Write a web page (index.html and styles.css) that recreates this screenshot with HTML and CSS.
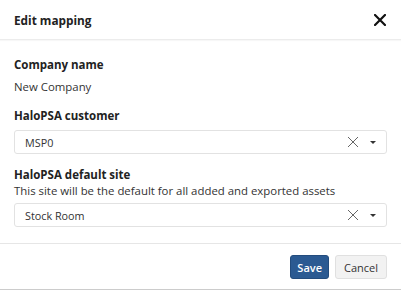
FILE: index.html
```html
<!DOCTYPE html>
<html lang="en">
<head>
    <meta charset="UTF-8">
    <title>Edit mapping</title>
    <link rel="stylesheet" href="styles.css">
</head>
<body>
    <div class="modal">
        <div class="modal-header">
            <h2 class="modal-title">Edit mapping</h2>
            <button class="close-btn" aria-label="Close">
                <svg width="12" height="12" viewBox="0 0 12 12"><path d="M1 1L11 11M11 1L1 11" stroke="#111" stroke-width="2.2" stroke-linecap="square"/></svg>
            </button>
        </div>

        <div class="modal-body">
            <div class="field-label">Company name</div>
            <div class="field-value">New Company</div>

            <div class="field-label spaced">HaloPSA customer</div>
            <div class="select">
                <span class="select-value">MSP0</span>
                <span class="select-clear">
                    <svg width="12" height="12" viewBox="0 0 12 12"><path d="M1 1L11 11M11 1L1 11" stroke="#666" stroke-width="1"/></svg>
                </span>
                <span class="select-caret"></span>
            </div>

            <div class="field-label spaced">HaloPSA default site</div>
            <div class="field-help">This site will be the default for all added and exported assets</div>
            <div class="select">
                <span class="select-value">Stock Room</span>
                <span class="select-clear">
                    <svg width="12" height="12" viewBox="0 0 12 12"><path d="M1 1L11 11M11 1L1 11" stroke="#666" stroke-width="1"/></svg>
                </span>
                <span class="select-caret"></span>
            </div>
        </div>

        <div class="modal-footer">
            <button class="btn btn-primary">Save</button>
            <button class="btn btn-default">Cancel</button>
        </div>
    </div>
</body>
</html>
```

FILE: styles.css
```css
body {
    margin: 0;
    font-family: "Open Sans", Arial, sans-serif;
    font-size: 11.4px;
    color: #333;
    background-color: #fff;
}
.modal {
    width: 401px;
    border-bottom: 1px solid #ccc;
}
.modal-header {
    height: 39px;
    padding: 0 15px 0 14px;
    display: flex;
    align-items: center;
    justify-content: space-between;
    border-bottom: 1px solid #ececec;
    box-shadow: 0 1px 1px rgba(0, 0, 0, 0.03);
}
.modal-title {
    margin: 0;
    font-size: 11.8px;
    font-weight: 700;
    color: #222;
}
.close-btn {
    background: none;
    border: none;
    padding: 0;
    width: 12px;
    height: 12px;
    display: flex;
    cursor: pointer;
}
.modal-body {
    padding: 17px 14px 16px;
}
.field-label {
    font-weight: 700;
    font-size: 11.5px;
    line-height: 16px;
    color: #222;
}
.field-label.spaced {
    margin-top: 13px;
}
.field-value {
    margin-top: 6px;
    line-height: 16px;
}
.field-help {
    line-height: 16px;
}
.select {
    margin-top: 6px;
    height: 22px;
    border: 1px solid #e2e2e2;
    border-radius: 3px;
    display: flex;
    align-items: center;
    padding: 0 10px;
}
.field-help + .select {
    margin-top: 4px;
}
.select-value {
    flex: 1;
    font-size: 10.8px;
}
.select-clear {
    display: flex;
    margin-right: 11px;
}
.select-caret {
    width: 0;
    height: 0;
    border-left: 3px solid transparent;
    border-right: 3px solid transparent;
    border-top: 3px solid #333;
}
.modal-footer {
    border-top: 1px solid #e6e6e6;
    padding: 11px 14px 10px;
    display: flex;
    justify-content: flex-end;
    gap: 6px;
}
.btn {
    height: 24px;
    padding: 0 8px;
    border-radius: 3px;
    font-family: inherit;
    font-size: 11px;
    cursor: pointer;
}
.btn-primary {
    background-color: #2b5a92;
    border: 1px solid #234c7d;
    color: #fff;
    font-weight: 600;
    padding: 0 6px;
}
.btn-default {
    background-color: #f2f2f2;
    border: 1px solid #e0e0e0;
    color: #333;
}
```
